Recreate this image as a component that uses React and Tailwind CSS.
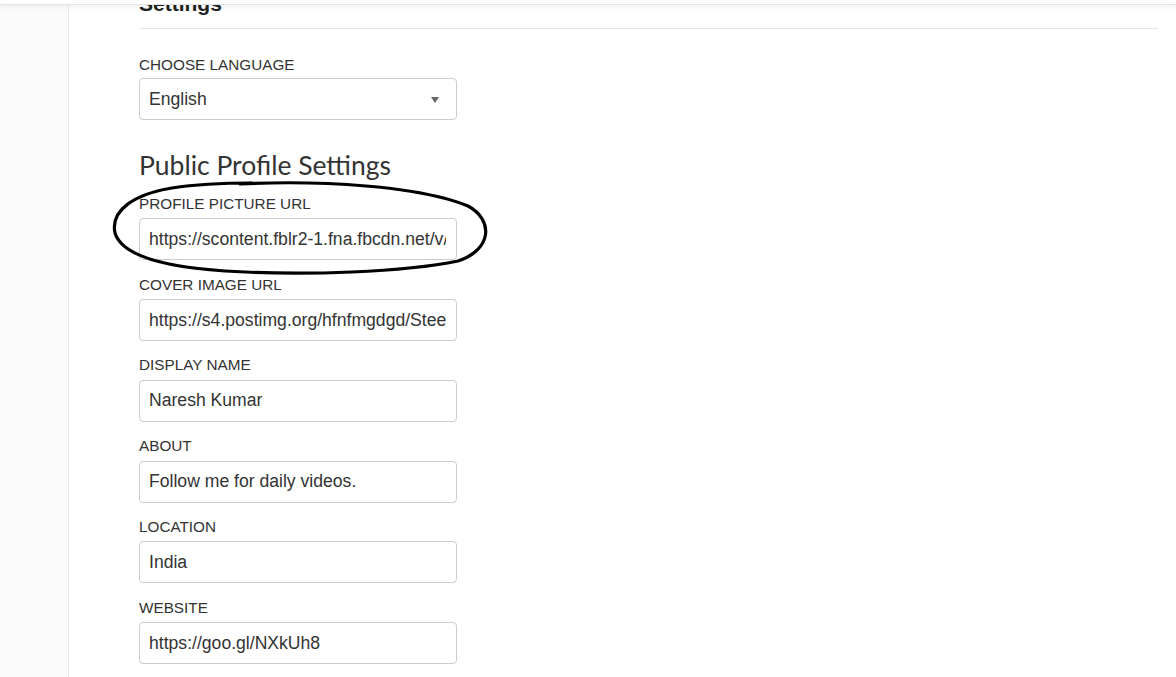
import React from "react";

const arial = { fontFamily: '"Liberation Sans", Arial, sans-serif' };

function Field({ label, value, first }) {
  return (
    <div className={first ? "mt-[12px]" : "mt-[14.3px]"}>
      <div className="text-[15.3px] leading-[20px] text-[#333] uppercase" style={arial}>
        {label}
      </div>
      <input
        readOnly
        value={value}
        className="mt-[4.5px] block w-[318px] h-[42px] border border-[#ccc] rounded-[4px] pl-[9px] pr-[10px] text-[17.6px] text-[#333] bg-white outline-none"
        style={arial}
      />
    </div>
  );
}

export default function App() {
  return (
    <div className="relative h-screen w-full overflow-hidden bg-white flex flex-col" style={arial}>
      <div className="relative z-10 h-[5px] shrink-0 bg-white border-b border-[#e3e3e3] shadow-[0_2px_5px_rgba(0,0,0,0.06)]" />
      <div className="flex flex-1 min-h-0 overflow-hidden">
        <div className="w-[69px] shrink-0 bg-[#fafbfa] border-r border-[#e8e8e8]" />
        <div className="flex-1 pl-[70px] pr-[18px]">
          <h3 className="-mt-[13px] text-[21px] leading-[24px] font-bold text-[#222]" style={arial}>
            Settings
          </h3>
          <div className="mt-[12px] border-t border-[#e6e6e6]" />
          <div className="mt-[26px] text-[15.3px] leading-[20px] text-[#333] uppercase">
            Choose Language
          </div>
          <div className="mt-[3px] w-[318px] h-[42px] border border-[#ccc] rounded-[4px] pl-[9px] pr-[10px] flex items-center justify-between text-[17.6px] text-[#333]">
            <span>English</span>
            <svg width="8" height="6" viewBox="0 0 8 6" className="mr-[7px] mt-[2px]">
              <path d="M0 0 L8 0 L4 6 Z" fill="#666" />
            </svg>
          </div>
          <h2
            className="mt-[30px] text-[26.5px] leading-[1.2] text-[#333]"
            style={{ fontFamily: 'Lato, "Open Sans", sans-serif' }}
          >
            Public Profile Settings
          </h2>
          <Field first label="Profile Picture URL" value="https://scontent.fblr2-1.fna.fbcdn.net/v/t1.0-9/12345678_n.jpg" />
          <Field label="Cover Image URL" value="https://s4.postimg.org/hfnfmgdgd/Steem_cover.jpg" />
          <Field label="Display Name" value="Naresh Kumar" />
          <Field label="About" value="Follow me for daily videos." />
          <Field label="Location" value="India" />
          <Field label="Website" value="https://goo.gl/NXkUh8" />
        </div>
      </div>
      <svg
        className="absolute left-0 top-0 pointer-events-none z-20"
        width="1176"
        height="677"
        viewBox="0 0 1176 677"
      >
        <path
          d="M 240 184 C 320 180, 420 186, 468 206 C 494 220, 492 250, 458 261 C 405 272, 305 276, 225 271 C 165 267, 122 256, 115 233 C 110 210, 135 194, 172 188 C 198 184, 222 183, 252 183"
          fill="none"
          stroke="#000"
          strokeWidth="3.2"
          strokeLinecap="round"
          strokeLinejoin="round"
        />
      </svg>
    </div>
  );
}
